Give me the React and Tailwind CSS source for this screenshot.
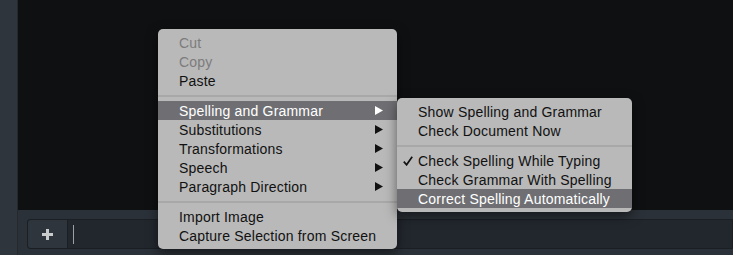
import React from 'react';

const font = { fontFamily: '"Liberation Sans", Arial, sans-serif' };

// one row in a context menu
const MenuItem = ({ label, disabled, active, arrow, checked }) => (
    <div
        className={`h-[19px] flex items-center pl-[21px] pr-[14px] text-[14px] tracking-[0.2px] leading-none relative ${
            active ? 'bg-[#6f6f73] text-white' : disabled ? 'text-[#7c7c7c]' : 'text-[#111111]'
        }`}
    >
        {checked && (
            <svg className="absolute left-[6px] top-[5px]" width="10" height="10" viewBox="0 0 10 10">
                <path d="M0.8 5.6 L3.6 8.8 L9.2 0.8" fill="none" stroke="#111111" strokeWidth="1.7" />
            </svg>
        )}
        <span className="flex-1">{label}</span>
        {arrow && (
            <svg width="8" height="9" viewBox="0 0 8 9">
                <path d="M0 0 L8 4.5 L0 9 Z" fill={active ? '#ffffff' : '#111111'} />
            </svg>
        )}
    </div>
);

const Separator = () => (
    <div className="h-[11px] flex items-center">
        <div className="w-full h-[2px] bg-[#a8a8a8]" />
    </div>
);

export default function App() {
    return (
        <div className="w-[733px] h-[255px] flex bg-[#101112] overflow-hidden relative" style={font}>
            <div className="w-[18px] h-full bg-[#2f353c] border-r border-[#25292f]" />
            <div className="flex-1 flex flex-col">
                <div className="flex-1 bg-[#0f1011]" />
                <div className="h-[45px] bg-[#2b3138] pt-[9px] pl-[9px]">
                    <div className="h-[30px] flex border border-[#1b1f24] rounded-l-[3px] bg-[#22272e]">
                        <div className="w-[40px] flex items-center justify-center bg-[#2f353d] border-r border-[#1b1f24] rounded-l-[3px]">
                            <svg width="11" height="11" viewBox="0 0 11 11">
                                <path d="M5.5 0 V11 M0 5.5 H11" stroke="#c9cbcd" strokeWidth="3" />
                            </svg>
                        </div>
                        <div className="flex items-center pl-[5px]">
                            <div className="w-[1px] h-[19px] bg-[#9aa0a6]" />
                        </div>
                    </div>
                </div>
            </div>

            <div className="absolute left-[158px] top-[29px] w-[239px] bg-[#b9b9b9] rounded-[5px] py-[4px] shadow-[0_4px_12px_rgba(0,0,0,0.5)]">
                <MenuItem label="Cut" disabled />
                <MenuItem label="Copy" disabled />
                <MenuItem label="Paste" />
                <Separator />
                <MenuItem label="Spelling and Grammar" arrow active />
                <MenuItem label="Substitutions" arrow />
                <MenuItem label="Transformations" arrow />
                <MenuItem label="Speech" arrow />
                <MenuItem label="Paragraph Direction" arrow />
                <Separator />
                <MenuItem label="Import Image" />
                <MenuItem label="Capture Selection from Screen" />
            </div>

            <div className="absolute left-[397px] top-[98px] w-[235px] bg-[#b9b9b9] rounded-[5px] py-[4px] shadow-[0_4px_12px_rgba(0,0,0,0.5)]">
                <MenuItem label="Show Spelling and Grammar" />
                <MenuItem label="Check Document Now" />
                <Separator />
                <MenuItem label="Check Spelling While Typing" checked />
                <MenuItem label="Check Grammar With Spelling" />
                <MenuItem label="Correct Spelling Automatically" active />
            </div>
        </div>
    );
}
